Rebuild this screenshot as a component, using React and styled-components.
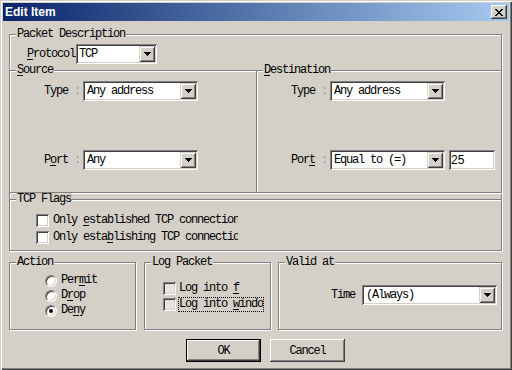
import React from 'react';
import styled, { createGlobalStyle } from 'styled-components';

const FACE = '#D4D0C8';
const mono = `
  font-family: "Liberation Mono", "DejaVu Sans Mono", monospace;
  font-size: 12px;
  letter-spacing: -1.2px;
`;

const Global = createGlobalStyle`
  html, body { margin: 0; padding: 0; background: ${FACE}; }
  #root { width: 512px; height: 370px; }
`;

const Window = styled.div`
  width: 512px;
  height: 370px;
  box-sizing: border-box;
  padding: 3px;
  background: ${FACE};
  display: flex;
  flex-direction: column;
  color: #000;
  ${mono}
  box-shadow: inset 1px 1px 0 ${FACE}, inset 2px 2px 0 #fff,
    inset -1px -1px 0 #404040, inset -2px -2px 0 #808080;
`;

const TitleBar = styled.div`
  height: 18px;
  flex: none;
  display: flex;
  align-items: center;
  justify-content: space-between;
  padding: 0 2px;
  background: linear-gradient(to right, #0a246a, #a6caf0);
`;

const Title = styled.span`
  font: bold 12px "Liberation Sans", Arial, sans-serif;
  letter-spacing: 0;
  color: #fff;
`;

const CloseButton = styled.div`
  width: 16px;
  height: 14px;
  box-sizing: border-box;
  background: ${FACE};
  display: flex;
  align-items: center;
  justify-content: center;
  box-shadow: inset -1px -1px 0 #404040, inset 1px 1px 0 #fff,
    inset -2px -2px 0 #808080, inset 2px 2px 0 ${FACE};
`;

const Body = styled.div`
  flex: 1;
  display: flex;
  flex-direction: column;
  padding: 7px 7px 0 6px;
`;

const Group = styled.fieldset`
  margin: ${(p) => p.$margin || '0'};
  padding: 0;
  min-width: 0;
  box-sizing: border-box;
  border: 1px solid #808080;
  ${(p) => (p.$noRight ? 'border-right: none;' : '')}
  ${(p) => (p.$w ? `width: ${p.$w}px;` : '')}
  flex: ${(p) => (p.$grow ? '1 1 0' : 'none')};
  box-shadow: inset 1px 1px 0 #fff, 1px 1px 0 #fff;
`;

const Legend = styled.legend`
  margin-left: 6px;
  padding: 0 1px;
  height: 13px;
  line-height: 13px;
  background: ${FACE};
  ${mono}
`;

const GroupBody = styled.div`
  display: flex;
  flex-direction: column;
  padding: ${(p) => p.$pad || '0'};
  gap: ${(p) => p.$gap || 0}px;
`;

const FieldRow = styled.div`
  display: flex;
  align-items: center;
  gap: ${(p) => (p.$gap == null ? 3 : p.$gap)}px;
  padding-left: ${(p) => p.$indent || 0}px;
  margin-top: ${(p) => p.$top || 0}px;
`;

const SplitRow = styled.div`
  display: flex;
  margin: 0 -1px;
`;

const Label = styled.span`
  white-space: pre;
  line-height: 13px;
`;

const Colon = styled.span`
  color: #9c9c9c;
`;

const Key = styled.u`
  text-decoration: underline;
  text-underline-offset: 2px;
`;

const Combo = styled.div`
  width: ${(p) => p.$w}px;
  height: 20px;
  flex: none;
  box-sizing: border-box;
  display: flex;
  align-items: center;
  padding: 2px 2px 2px ${(p) => (p.$inset == null ? 4 : p.$inset)}px;
  background: #fff;
  box-shadow: inset 1px 1px 0 #808080, inset -1px -1px 0 #fff,
    inset 2px 2px 0 #404040, inset -2px -2px 0 ${FACE};
`;

const ComboText = styled.span`
  flex: 1;
  overflow: hidden;
  white-space: pre;
`;

const DropButton = styled.div`
  width: 16px;
  height: 16px;
  flex: none;
  display: flex;
  align-items: center;
  justify-content: center;
  background: ${FACE};
  box-shadow: inset 1px 1px 0 ${FACE}, inset -1px -1px 0 #404040,
    inset 2px 2px 0 #fff, inset -2px -2px 0 #808080;
`;

const TextField = styled.div`
  width: 46px;
  height: 20px;
  flex: none;
  box-sizing: border-box;
  margin-left: 1px;
  padding: 0 2px;
  display: flex;
  align-items: center;
  background: #fff;
  font: 12px "Liberation Sans", Arial, sans-serif;
  letter-spacing: 0;
  box-shadow: inset 1px 1px 0 #808080, inset -1px -1px 0 #fff,
    inset 2px 2px 0 #404040, inset -2px -2px 0 ${FACE};
`;

const CheckRow = styled.div`
  display: flex;
  align-items: center;
  height: ${(p) => p.$h}px;
  gap: ${(p) => p.$gap}px;
`;

const CheckBox = styled.span`
  width: 13px;
  height: 13px;
  flex: none;
  box-sizing: border-box;
  background: ${(p) => p.$fill || '#fff'};
  box-shadow: inset 1px 1px 0 #808080, inset -1px -1px 0 #fff,
    inset 2px 2px 0 #404040, inset -2px -2px 0 ${FACE};
`;

const CheckLabel = styled.span`
  width: ${(p) => p.$w}px;
  overflow: hidden;
  white-space: pre;
  line-height: 13px;
  ${(p) => (p.$focus ? 'outline: 1px dotted #000;' : '')}
`;

const Radio = styled.span`
  position: relative;
  width: 12px;
  height: 12px;
  flex: none;
  box-sizing: border-box;
  border-radius: 50%;
  background: #fff;
  border: 1px solid;
  border-color: #808080 #fff #fff #808080;
  box-shadow: inset 1px 1px 0 #404040, inset -1px -1px 0 ${FACE};
  &::after {
    content: '';
    display: ${(p) => (p.$checked ? 'block' : 'none')};
    position: absolute;
    left: 3px;
    top: 3px;
    width: 4px;
    height: 4px;
    border-radius: 50%;
    background: #000;
  }
`;

const BottomRow = styled.div`
  display: flex;
  margin-top: 5px;
`;

const ButtonRow = styled.div`
  display: flex;
  gap: 9px;
  margin-top: 9px;
  padding-left: 177px;
`;

const Button = styled.button`
  width: 75px;
  height: 23px;
  box-sizing: border-box;
  padding: 0;
  margin: 0;
  background: ${FACE};
  color: #000;
  ${mono}
  border: ${(p) => (p.$default ? '1px solid #000' : 'none')};
  box-shadow: inset -1px -1px 0 #404040, inset 1px 1px 0 #fff,
    inset -2px -2px 0 #808080, inset 2px 2px 0 ${FACE};
  outline: none;
`;

const Arrow = () => (
  <svg width="7" height="4" viewBox="0 0 7 4" shapeRendering="crispEdges">
    {[0, 1, 2, 3].map((i) => (
      <rect key={i} x={i} y={i} width={7 - 2 * i} height="1" fill="#000" />
    ))}
  </svg>
);

const CloseGlyph = () => (
  <svg width="8" height="7" viewBox="0 0 8 7" shapeRendering="crispEdges">
    {[0, 1, 2, 3, 4, 5, 6].map((i) => {
      const d = Math.min(i, 6 - i);
      return (
        <g key={i} fill="#000">
          <rect x={d} y={i} width="2" height="1" />
          <rect x={6 - d} y={i} width="2" height="1" />
        </g>
      );
    })}
  </svg>
);

const ComboBox = ({ w, inset, children }) => (
  <Combo $w={w} $inset={inset}>
    <ComboText>{children}</ComboText>
    <DropButton>
      <Arrow />
    </DropButton>
  </Combo>
);

const Check = ({ h, gap, fill, w, focus, children }) => (
  <CheckRow $h={h} $gap={gap}>
    <CheckBox $fill={fill} />
    <CheckLabel $w={w} $focus={focus}>
      {children}
    </CheckLabel>
  </CheckRow>
);

const RadioItem = ({ checked, children }) => (
  <CheckRow $h={15} $gap={4}>
    <Radio $checked={checked} />
    <Label>{children}</Label>
  </CheckRow>
);

export default function App() {
  return (
    <>
      <Global />
      <Window>
        <TitleBar>
          <Title>Edit Item</Title>
          <CloseButton>
            <CloseGlyph />
          </CloseButton>
        </TitleBar>
        <Body>
          <Group>
            <Legend>Packet Description</Legend>
            <GroupBody>
              <FieldRow $indent={17} $top={3} $gap={1}>
                <Label>
                  <Key>P</Key>rotocol
                </Label>
                <ComboBox w={81} inset={3}>
                  TCP
                </ComboBox>
              </FieldRow>
              <SplitRow>
                <Group $w={247} $noRight>
                  <Legend>
                    <Key>S</Key>ource
                  </Legend>
                  <GroupBody $pad="4px 0 22px 34px" $gap={49}>
                    <FieldRow>
                      <Label>
                        Type <Colon>:</Colon>
                      </Label>
                      <ComboBox w={115}>Any address</ComboBox>
                    </FieldRow>
                    <FieldRow>
                      <Label>
                        P<Key>o</Key>rt <Colon>:</Colon>
                      </Label>
                      <ComboBox w={115}>Any</ComboBox>
                    </FieldRow>
                  </GroupBody>
                </Group>
                <Group $w={246}>
                  <Legend>
                    <Key>D</Key>estination
                  </Legend>
                  <GroupBody $pad="4px 0 22px 34px" $gap={49}>
                    <FieldRow>
                      <Label>
                        Type <Colon>:</Colon>
                      </Label>
                      <ComboBox w={115}>Any address</ComboBox>
                    </FieldRow>
                    <FieldRow>
                      <Label>
                        Por<Key>t</Key> <Colon>:</Colon>
                      </Label>
                      <ComboBox w={115}>Equal to (=)</ComboBox>
                      <TextField>25</TextField>
                    </FieldRow>
                  </GroupBody>
                </Group>
              </SplitRow>
              <Group $margin="0 -1px -1px">
                <Legend>TCP Flags</Legend>
                <GroupBody $pad="6px 0 4px 26px">
                  <Check h={17} gap={4} w={185}>
                    Only <Key>e</Key>stablished TCP connection
                  </Check>
                  <Check h={17} gap={4} w={185}>
                    Only esta<Key>b</Key>lishing TCP connection
                  </Check>
                </GroupBody>
              </Group>
            </GroupBody>
          </Group>

          <BottomRow>
            <Group $w={127}>
              <Legend>Action</Legend>
              <GroupBody $pad="4px 0 11px 35px">
                <RadioItem>
                  Per<Key>m</Key>it
                </RadioItem>
                <RadioItem>
                  D<Key>r</Key>op
                </RadioItem>
                <RadioItem checked>
                  De<Key>n</Key>y
                </RadioItem>
              </GroupBody>
            </Group>
            <Group $w={127} $margin="0 7px 0 8px">
              <Legend>Log Packet</Legend>
              <GroupBody $pad="11px 0 17px 18px">
                <Check h={16} gap={3} w={84} fill="#e6e3de">
                  Log into <Key>f</Key>
                </Check>
                <Check h={16} gap={3} w={84} fill="#e6e3de" focus>
                  Log into <Key>w</Key>indow
                </Check>
              </GroupBody>
            </Group>
            <Group $grow>
              <Legend>Valid at</Legend>
              <GroupBody $pad="16px 0 24px 52px">
                <FieldRow $gap={7}>
                  <Label>Time</Label>
                  <ComboBox w={135}>(Always)</ComboBox>
                </FieldRow>
              </GroupBody>
            </Group>
          </BottomRow>

          <ButtonRow>
            <Button $default>OK</Button>
            <Button>Cancel</Button>
          </ButtonRow>
        </Body>
      </Window>
    </>
  );
}
